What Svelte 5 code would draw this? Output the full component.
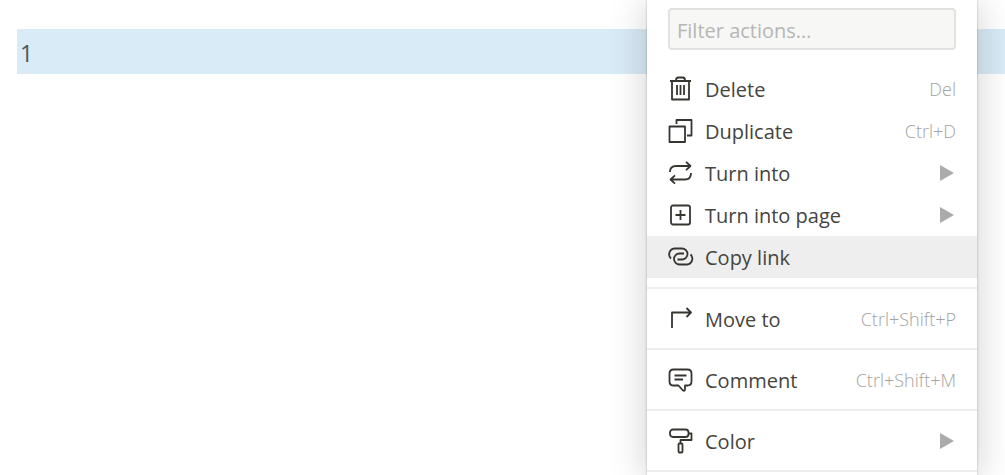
<script>
  const groups = [
    [
      { label: 'Delete', icon: 'trash', shortcut: 'Del' },
      { label: 'Duplicate', icon: 'duplicate', shortcut: 'Ctrl+D' },
      { label: 'Turn into', icon: 'turn', submenu: true },
      { label: 'Turn into page', icon: 'page', submenu: true },
      { label: 'Copy link', icon: 'link', active: true },
    ],
    [{ label: 'Move to', icon: 'move', shortcut: 'Ctrl+Shift+P' }],
    [{ label: 'Comment', icon: 'comment', shortcut: 'Ctrl+Shift+M' }],
    [{ label: 'Color', icon: 'color', submenu: true }],
  ];
</script>

{#snippet icon(name)}
  <svg class="icon" viewBox="0 0 26 26" aria-hidden="true">
    {#if name === 'trash'}
      <path d="M2 5h21M4 5v18.500h17V5M8 4.500V4q0-2.500 2.500-2.500h4Q17 1.500 17 4v.5M9 9v10M12.500 9v10M16 9v10" />
    {:else if name === 'duplicate'}
      <path d="M1.500 8.500H17V24H1.500zM8.500 6V2h15v15.500H19" />
    {:else if name === 'turn'}
      <path d="M2 12C2 8 4 6 8 6h14M18 1.800L22.500 6 18 10.200M23 13c0 4-2 6.500-6 6.500H3M7 15.300L2.500 19.500 7 23.700" />
    {:else if name === 'page'}
      <rect x="3" y="3.500" width="19" height="19" rx="2" />
      <path d="M12.500 8v10M7.500 13h10" />
    {:else if name === 'link'}
      <path d="M3 14.500A5.800 5.800 0 0 1 6.500 4.500h7.500a5.500 5.500 0 0 1 0 11h-4.500" />
      <path d="M22.500 10.500A5.800 5.800 0 0 1 19 20.500h-7.500a5.500 5.500 0 0 1 0-11H16" />
    {:else if name === 'move'}
      <path d="M4 22V6.500h18.500M18.500 2L23 6.500 18.500 11" />
    {:else if name === 'comment'}
      <path d="M5.500 2.500h14q4 0 4 4v8q0 4-4 4H17v3.500q0 3-2.500 1l-4-4.500h-5q-4 0-4-4v-8q0-4 4-4zM6.500 8.500h12M6.500 12.500H15" />
    {:else if name === 'color'}
      <rect x="2" y="1.500" width="18.500" height="7.500" rx="3" />
      <path d="M20.500 5.500h3V12h-11v3.500" />
      <rect x="10.500" y="15.500" width="4" height="9" rx="1" />
    {/if}
  </svg>
{/snippet}

<main class="page">
  <p class="block">1</p>
  <div class="menu">
    <div class="filter">
      <input type="text" placeholder="Filter actions…" aria-label="Filter actions" />
    </div>
    {#each groups as group}
      <div class="group">
        {#each group as item}
          <button type="button" class="item" class:active={item.active}>
            {@render icon(item.icon)}
            <span class="label">{item.label}</span>
            {#if item.shortcut}
              <span class="shortcut">{item.shortcut}</span>
            {:else if item.submenu}
              <svg class="arrow" viewBox="0 0 14 16" aria-hidden="true"><path d="M0 0L14 8 0 16z" /></svg>
            {/if}
          </button>
        {/each}
      </div>
    {/each}
  </div>
</main>

<style>
  :global(body) {
    margin: 0;
    background: #fff;
  }
  .page {
    position: relative;
    box-sizing: border-box;
    min-height: 100vh;
    overflow: hidden;
    padding: 29px 0 0 17px;
    font-family: 'Open Sans', 'Noto Sans', sans-serif;
    color: #45443f;
  }
  .block {
    margin: 0;
    padding: 3px 3px 0;
    background: #d9ebf7;
    color: #4b555b;
    font-size: 23px;
    line-height: 42px;
  }
  .menu {
    position: absolute;
    top: 0;
    right: 28px;
    width: 330px;
    min-height: 100%;
    background: #fff;
    box-shadow: 0 0 2px rgba(15, 15, 15, 0.3), 0 4px 36px rgba(15, 15, 15, 0.2);
  }
  .filter {
    padding: 8px 21px 9px;
  }
  input {
    display: block;
    box-sizing: border-box;
    width: 100%;
    height: 42px;
    padding: 2px 7px 0;
    border: 2px solid #e2e2e1;
    border-radius: 4px;
    background: #f7f7f5;
    color: inherit;
    font: inherit;
    font-size: 20px;
  }
  input::placeholder {
    color: #b6b6b4;
    opacity: 1;
  }
  .group {
    padding: 9px 0 8px;
    border-bottom: 2px solid #ededec;
  }
  .group:nth-child(2) {
    padding-bottom: 9px;
  }
  .item {
    display: flex;
    align-items: center;
    width: 100%;
    height: 42px;
    padding: 0 21px;
    border: 0;
    background: none;
    color: inherit;
    font: inherit;
    font-size: 20px;
    text-align: left;
  }
  .item.active {
    background: #eee;
  }
  .icon {
    flex: none;
    width: 26px;
    height: 26px;
    margin-right: 11px;
    fill: none;
    stroke: #373530;
    stroke-width: 1.8;
    stroke-linejoin: round;
  }
  .label {
    flex: 1;
    white-space: nowrap;
  }
  .shortcut {
    color: #a3a2a0;
    font-size: 18px;
    font-weight: 300;
  }
  .arrow {
    width: 14px;
    height: 16px;
    margin-right: 2px;
    fill: #acaba9;
  }
</style>
